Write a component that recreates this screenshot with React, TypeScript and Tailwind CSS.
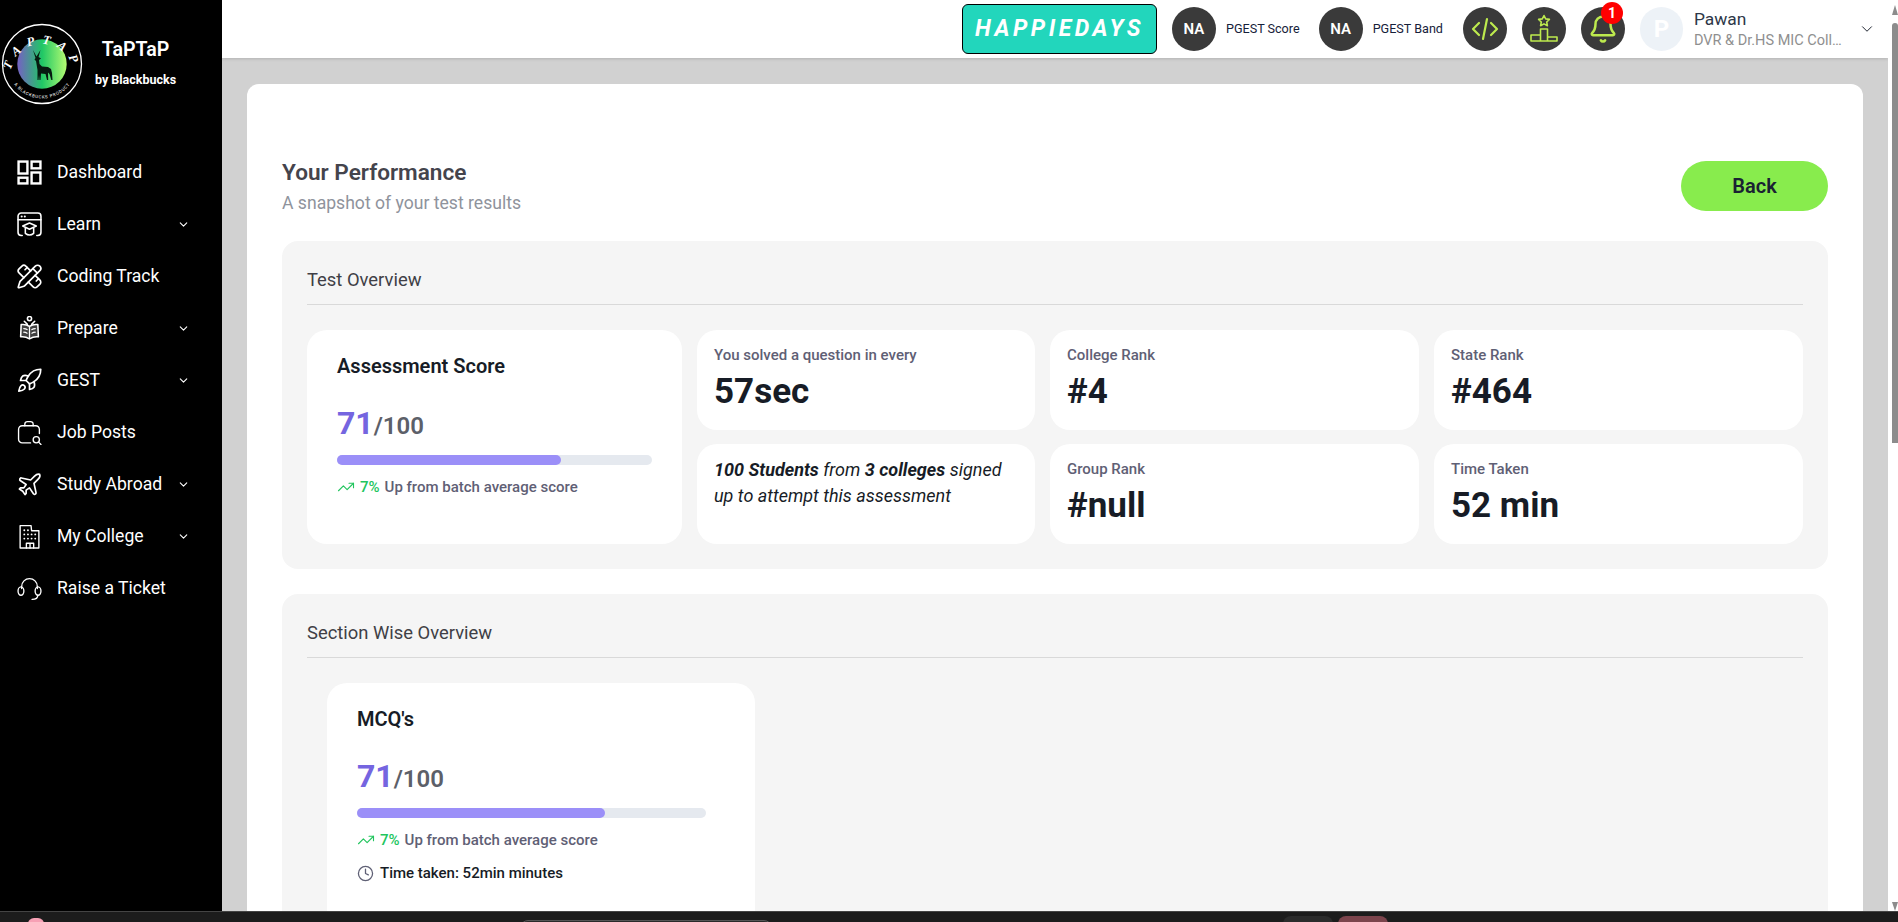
import { Bell, ChevronDown, Clock, PencilRuler, Plane, Rocket, TrendingUp } from 'lucide-react';
import type { ReactNode } from 'react';

const iconProps = {
  width: 25,
  height: 25,
  viewBox: '0 0 24 24',
  fill: 'none',
  stroke: 'currentColor',
  strokeWidth: 1.5,
  strokeLinecap: 'round' as const,
  strokeLinejoin: 'round' as const,
};

const DashboardIcon = () => (
  <svg {...iconProps} strokeWidth={2.3} strokeLinecap="butt" strokeLinejoin="miter">
    <rect x="1.500" y="1.500" width="8.500" height="11.500" />
    <rect x="14" y="1.500" width="8.500" height="6.500" />
    <rect x="1.500" y="17" width="8.500" height="5.500" />
    <rect x="14" y="12" width="8.500" height="10.500" />
  </svg>
);

const LearnIcon = () => (
  <svg {...iconProps}>
    <path d="M5 22.500H4a3 3 0 0 1-3-3V4a3 3 0 0 1 3-3h16a3 3 0 0 1 3 3v15.500a3 3 0 0 1-3 3h-1" />
    <path d="M1 7.500h22" />
    <path d="M4.500 4.300h.01M7.500 4.300h.01" strokeWidth={2} />
    <path d="M12 10.500l6.500 3-6.500 3-6.500-3z" />
    <path d="M8 15.500v5c2.500 2 5.500 2 8 0v-5" />
  </svg>
);

const PrepareIcon = () => (
  <svg {...iconProps}>
    <circle cx="12" cy="2.500" r="2" />
    <path d="M7 5l3 3M17 5l-3 3" />
    <path d="M12 10c-2.500-1.800-5-2.200-8-1.800L3.500 20c3-.4 5.800.2 8.500 2 2.700-1.800 5.500-2.400 8.500-2L20 8.200c-3-.4-5.500 0-8 1.800z" fill="currentColor" fillOpacity="0.25" />
    <path d="M12 10v11M6.500 12c1.200 0 2.200.3 3.200 1M6.500 15.500c1.200 0 2.200.3 3.200 1M17.500 12c-1.200 0-2.200.3-3.200 1M17.500 15.500c-1.200 0-2.200.3-3.200 1" strokeWidth={1.2} />
  </svg>
);

const JobIcon = () => (
  <svg {...iconProps} strokeWidth={1.3}>
    <path d="M13 22H5a3.500 3.500 0 0 1-3.500-3.500V9A3.500 3.500 0 0 1 5 5.500h13A3.500 3.500 0 0 1 21.500 9v4" />
    <path d="M7.500 5.500V4a2.500 2.500 0 0 1 2.500-2.500h3A2.500 2.500 0 0 1 15.500 4v1.500" />
    <circle cx="18.500" cy="19" r="3" />
    <path d="M21 21.500l2 2" />
  </svg>
);

const CollegeIcon = () => (
  <svg {...iconProps} strokeWidth={1.3}>
    <path d="M3 23V1.500h10.500l.5 5H21V23z" />
    <path d="M9 23v-4.500h7V23M12.500 18.500V23" />
    <path d="M7 6h.01M10.500 6h.01M7 10h.01M10.500 10h.01M14 10h.01M17.500 10h.01M7 14h.01M10.500 14h.01M14 14h.01M17.500 14h.01" strokeWidth={1.8} />
  </svg>
);

const TicketIcon = () => (
  <svg {...iconProps} strokeWidth={1.3}>
    <path d="M4.500 12V10a7.500 7.500 0 0 1 15 0v2" />
    <ellipse cx="3.800" cy="14.500" rx="2.800" ry="4" />
    <ellipse cx="20.200" cy="14.500" rx="2.800" ry="4" />
    <path d="M20 18.500c0 3-2.500 4-5.500 4" />
  </svg>
);

const sidebarIcon = { width: 27, height: 27, strokeWidth: 1.5, className: '-ml-px' };

const navItems: { label: string; icon: ReactNode; hasMenu?: boolean }[] = [
  { label: 'Dashboard', icon: <DashboardIcon /> },
  { label: 'Learn', icon: <LearnIcon />, hasMenu: true },
  { label: 'Coding Track', icon: <PencilRuler {...sidebarIcon} /> },
  { label: 'Prepare', icon: <PrepareIcon />, hasMenu: true },
  { label: 'GEST', icon: <Rocket {...sidebarIcon} />, hasMenu: true },
  { label: 'Job Posts', icon: <JobIcon /> },
  { label: 'Study Abroad', icon: <Plane {...sidebarIcon} />, hasMenu: true },
  { label: 'My College', icon: <CollegeIcon />, hasMenu: true },
  { label: 'Raise a Ticket', icon: <TicketIcon /> },
];

const Logo = () => (
  <svg width="82" height="82" viewBox="0 0 82 82" className="shrink-0">
    <defs>
      <linearGradient id="logoFill" x1="0" y1="0" x2="1" y2="0">
        <stop offset="0" stopColor="#7660c4" />
        <stop offset="0.5" stopColor="#1fc765" />
        <stop offset="1" stopColor="#b4fb72" />
      </linearGradient>
      <path id="logoTop" d="M10 47a31.500 31.500 0 0 1 62 0" />
      <path id="logoBottom" d="M6.500 41a34.500 34.500 0 0 0 69 0" />
    </defs>
    <circle cx="41" cy="41" r="39.500" fill="#000" stroke="#fff" strokeWidth="1.300" />
    <circle cx="41" cy="41" r="24.700" fill="url(#logoFill)" />
    <text fill="#fff" fontFamily="'Liberation Serif', serif" fontStyle="italic" fontWeight="700" fontSize="12.500" letterSpacing="7">
      <textPath href="#logoTop" startOffset="50%" textAnchor="middle">TAPTAP</textPath>
    </text>
    <text fill="#fff" fontFamily="Roboto, sans-serif" fontSize="4.300" letterSpacing="0.700">
      <textPath href="#logoBottom" startOffset="50%" textAnchor="middle">A BLACKBUCKS PRODUCT</textPath>
    </text>
    <path
      d="M32 27L35.500 33.500 39.500 27 37.500 34 40 35.500 38 37 38.500 41 41 43.500 47 44 50 46 51 50 51.500 57 50.300 57 48.500 51 47 49.500 47.200 57 46 57 44.500 51 40 50.500 39.500 57 38.500 57 38 52 37.500 57 36.500 57 36.500 47 35.500 41 35 38 33.500 36.500 34.500 35z"
      fill="#071a10"
    />
  </svg>
);

const Sidebar = () => (
  <aside className="w-[222px] shrink-0 bg-black text-white">
    <div className="flex h-[106px] items-start pt-[23px] pl-px">
      <Logo />
      <div className="ml-[12px] flex w-[81px] flex-col items-center pt-[15px]">
        <span className="text-[19.6px] leading-[24px] font-semibold">TaPTaP</span>
        <span className="mt-[9px] text-[12.5px] leading-[18px] font-bold whitespace-nowrap">by Blackbucks</span>
      </div>
    </div>
    <nav className="mt-[40px] flex flex-col">
      {navItems.map((item) => (
        <div key={item.label} className="flex h-[52px] items-center pr-[32px] pl-[17px]">
          <span className="flex w-[40px] shrink-0">{item.icon}</span>
          <span className="flex-1 text-[17.6px] whitespace-nowrap">{item.label}</span>
          {item.hasMenu && <ChevronDown size={13} strokeWidth={2} />}
        </div>
      ))}
    </nav>
  </aside>
);

const CircleBadge = ({ children }: { children: ReactNode }) => (
  <div className="flex h-[44px] w-[44px] shrink-0 items-center justify-center rounded-full bg-[#3a3a3a] text-[#bdea4e]">
    {children}
  </div>
);

const PgestStat = ({ label }: { label: string }) => (
  <div className="flex items-center">
    <CircleBadge>
      <span className="text-[15px] font-semibold text-white">NA</span>
    </CircleBadge>
    <span className="ml-[10px] text-[12.6px] whitespace-nowrap text-[#16213a]">{label}</span>
  </div>
);

const Header = () => (
  <header className="flex h-[58px] shrink-0 items-center bg-white pl-[740px] shadow-[0_1px_3px_rgba(0,0,0,0.15)]">
    <div className="flex h-[50px] w-[195px] shrink-0 items-center justify-center rounded-[6px] border border-black bg-[#22d6bc] text-[23px] font-bold tracking-[3.500px] text-white italic">
      HAPPIEDAYS
    </div>
    <div className="ml-[15px] flex gap-[19px]">
      <PgestStat label="PGEST Score" />
      <PgestStat label="PGEST Band" />
    </div>
    <div className="ml-[20px] flex gap-[15px]">
      <CircleBadge>
        <svg width="28" height="28" viewBox="0 0 28 28" fill="none" stroke="currentColor" strokeWidth="2.200" strokeLinecap="round" strokeLinejoin="round">
          <path d="M8 8l-6 6 6 6M20 8l6 6-6 6M16 4l-4 20" />
        </svg>
      </CircleBadge>
      <CircleBadge>
        <svg width="28" height="30" viewBox="0 0 28 30" fill="none" stroke="currentColor" strokeWidth="1.600" strokeLinejoin="round">
          <path d="M14 1.500l1.700 3.400 3.700.5-2.700 2.600.7 3.700-3.400-1.800-3.400 1.800.7-3.700-2.700-2.600 3.700-.5z" />
          <path d="M10.500 15h7v12h-7zM1 21h9.500v6H1zM17.500 23H27v4h-9.500z" />
        </svg>
      </CircleBadge>
      <div className="relative">
        <CircleBadge>
          <Bell size={30} strokeWidth={2} />
        </CircleBadge>
        <span className="absolute top-[-5px] right-[2px] flex h-[22px] w-[22px] items-center justify-center rounded-full bg-[#ff0000] text-[14px] font-bold text-white">
          1
        </span>
      </div>
    </div>
    <div className="ml-[15px] flex h-[44px] w-[43px] shrink-0 items-center justify-center rounded-full bg-[#edf2f7] text-[24px] font-bold text-white">
      P
    </div>
    <div className="ml-[11px] flex w-[155px] shrink-0 flex-col pt-[2px]">
      <span className="text-[17.4px] leading-[22px] text-[#2d3748]">Pawan</span>
      <span className="truncate text-[14.5px] leading-[22px] text-[#8f8f8f]">DVR &amp; Dr.HS MIC College</span>
    </div>
    <ChevronDown size={18} strokeWidth={1.3} className="ml-[9px] shrink-0 text-[#1a202c]" />
  </header>
);

const ScoreBlock = () => (
  <>
    <p className="mt-[26px] flex items-baseline leading-[38px] font-semibold">
      <span className="text-[32px] font-bold text-[#7565e0]">71</span>
      <span className="text-[24px] text-[#5c6069]">/100</span>
    </p>
    <div className="mt-[10px] h-[10px] rounded-full bg-[#e5e9ef]">
      <div className="h-full w-[71%] rounded-full bg-[#9b8ff8]" />
    </div>
    <p className="mt-[12px] flex items-center text-[15px] leading-[20px] font-medium text-[#5f6075]">
      <TrendingUp size={18} strokeWidth={1.5} className="text-[#22c55e]" />
      <span className="mx-[5px] text-[#22c55e]">7%</span>
      Up from batch average score
    </p>
  </>
);

const StatCard = ({ label, value }: { label: string; value: string }) => (
  <div className="h-[100px] rounded-[20px] bg-white px-[17px] pt-[15px]">
    <p className="text-[15px] leading-[20px] font-medium text-[#5f6075]">{label}</p>
    <p className="mt-[6px] text-[35px] leading-[42px] font-bold text-[#171c26]">{value}</p>
  </div>
);

const SectionPanel = ({ title, children }: { title: string; children: ReactNode }) => (
  <section className="rounded-[16px] bg-[#f5f5f5] px-[25px] pt-[26px] pb-[25px]">
    <h3 className="border-b border-[#d9d9d9] pb-[11px] text-[18.4px] leading-[26px] font-normal text-[#3f3f46]">{title}</h3>
    <div className="mt-[25px]">{children}</div>
  </section>
);

const Scrollbar = () => (
  <div className="flex w-[10px] shrink-0 flex-col items-end bg-white pt-[5px]">
    <div className="h-0 w-0 border-r-[3.500px] border-b-[10px] border-l-[3.500px] border-r-transparent border-b-[#8c8c8c] border-l-transparent" />
    <div className="mt-[8px] h-[420px] w-[6px] rounded-t-[3px] bg-[#8c8c8c]" />
    <div className="mt-auto h-0 w-0 border-t-[9px] border-r-[3.500px] border-l-[3.500px] border-t-[#8c8c8c] border-r-transparent border-l-transparent" />
  </div>
);

const Taskbar = () => (
  <div className="flex h-[11px] shrink-0 items-start overflow-hidden border-t border-[#444444] bg-[#1c1c1c]">
    <span className="mt-[6px] ml-[28px] h-[12px] w-[16px] rounded-full bg-[#f7a1b5]" />
    <span className="mt-[8px] ml-[476px] h-[20px] w-[252px] rounded-t-[8px] border border-[#555555] bg-[#2a2a2a]" />
    <span className="mt-[4px] ml-[511px] h-[20px] w-[50px] rounded-t-[8px] bg-[#2b2b2b]" />
    <span className="mt-[4px] ml-[5px] h-[20px] w-[50px] rounded-t-[8px] bg-[#7c444c]" />
  </div>
);

export default function App() {
  return (
    <div className="flex h-[922px] w-[1898px] flex-col overflow-hidden font-['Roboto',sans-serif]">
      <div className="flex min-h-0 flex-1">
        <Sidebar />
        <div className="flex min-w-0 flex-1 flex-col bg-[#d1d1d1]">
          <Header />
          <main className="min-h-0 flex-1 overflow-hidden px-[25px] pt-[26px]">
            <div className="rounded-[12px] bg-white px-[35px] pt-[77px] pb-[40px]">
              <div className="mb-[30px] flex h-[50px] items-start justify-between">
                <div>
                  <h2 className="text-[22.6px] leading-[24px] font-semibold text-[#44444c]">Your Performance</h2>
                  <p className="mt-[5px] text-[17.6px] leading-[26px] text-[#8f939c]">A snapshot of your test results</p>
                </div>
                <button className="h-[50px] w-[147px] rounded-full bg-[#88ec4d] text-[20px] font-semibold text-[#1a2233]">Back</button>
              </div>

              <div className="flex flex-col gap-[25px]">
                <SectionPanel title="Test Overview">
                  <div className="grid grid-cols-[375px_338px_369px_369px] gap-x-[15px] gap-y-[14px]">
                    <div className="row-span-2 rounded-[20px] bg-white px-[30px] pt-[24px]">
                      <h4 className="text-[20px] leading-[24px] font-semibold text-[#171c26]">Assessment Score</h4>
                      <ScoreBlock />
                    </div>
                    <StatCard label="You solved a question in every" value="57sec" />
                    <StatCard label="College Rank" value="#4" />
                    <StatCard label="State Rank" value="#464" />
                    <div className="h-[100px] rounded-[20px] bg-white px-[17px] pt-[13px]">
                      <p className="text-[18px] leading-[26px] text-[#171c26] italic">
                        <b>100 Students</b> from <b>3 colleges</b> signed up to attempt this assessment
                      </p>
                    </div>
                    <StatCard label="Group Rank" value="#null" />
                    <StatCard label="Time Taken" value="52 min" />
                  </div>
                </SectionPanel>

                <SectionPanel title="Section Wise Overview">
                  <div className="ml-[20px] h-[260px] w-[428px] rounded-[20px] bg-white pt-[24px] pr-[49px] pl-[30px]">
                    <h4 className="text-[20px] leading-[24px] font-semibold text-[#171c26]">MCQ's</h4>
                    <ScoreBlock />
                    <p className="mt-[13px] flex items-center text-[15px] leading-[20px] font-medium text-[#171c26]">
                      <Clock size={17} strokeWidth={1.8} className="mr-[6px] text-[#5f6075]" />
                      Time taken: 52min minutes
                    </p>
                  </div>
                </SectionPanel>
              </div>
            </div>
          </main>
        </div>
        <Scrollbar />
      </div>
      <Taskbar />
    </div>
  );
}
